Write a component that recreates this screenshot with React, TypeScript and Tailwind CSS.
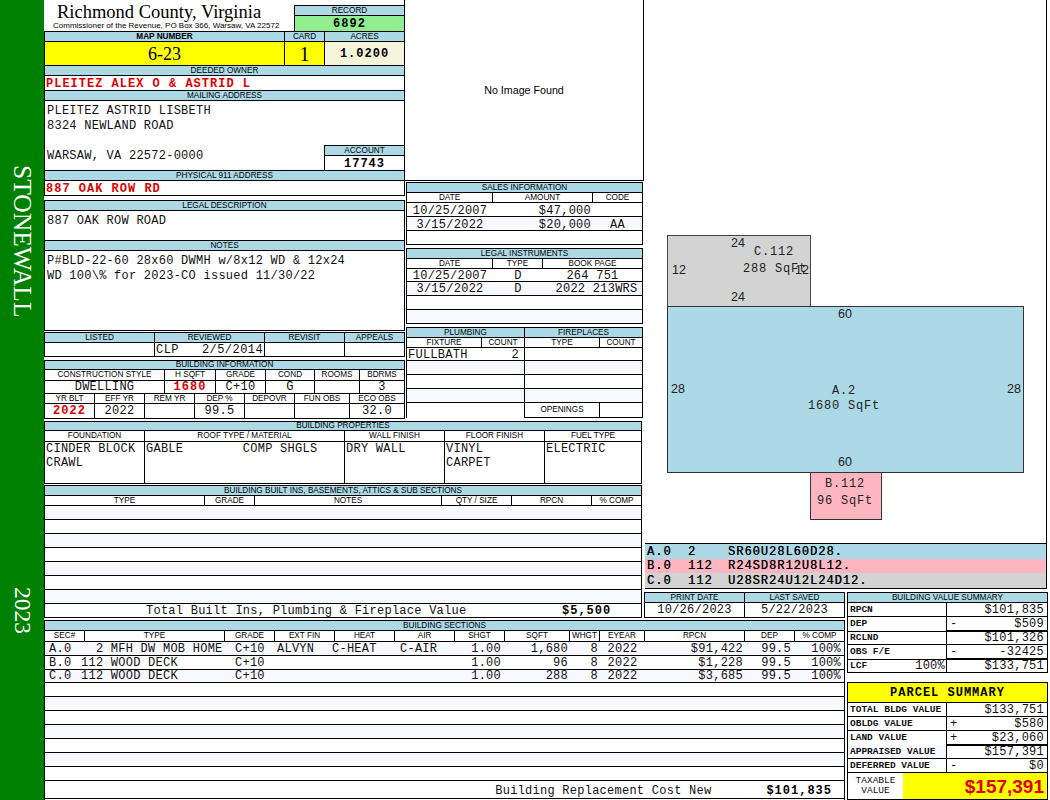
import type { ReactNode } from 'react';

const sans = "font-['Liberation_Sans',Arial,sans-serif]";
const mono = "font-['Liberation_Mono','Courier_New',monospace] text-[12px] tracking-[0.25px] text-[#111]";
const monoBold = "font-['Liberation_Mono','Courier_New',monospace] text-[12px] font-bold tracking-[1px]";
const label = "font-['Liberation_Mono','Courier_New',monospace] text-[9.5px] font-bold tracking-[0px] text-[#111]";

function Head({ children, className = 'h-[10px]' }: { children?: ReactNode; className?: string }) {
    return (
        <div className={`flex items-center justify-center overflow-hidden whitespace-nowrap border-b border-black bg-[#add8e6] pt-px text-[8.2px] leading-none text-black ${sans} ${className}`}>
            {children}
        </div>
    );
}

// column caption, same size as the blue header
function Cap({ children, className = '' }: { children?: ReactNode; className?: string }) {
    return (
        <div className={`flex items-center justify-center overflow-hidden whitespace-nowrap border-r border-black pt-px text-[8.2px] leading-none text-black last:border-r-0 ${sans} ${className}`}>
            {children}
        </div>
    );
}

function Val({ children, className = '' }: { children?: ReactNode; className?: string }) {
    return (
        <div className={`flex items-center justify-center whitespace-pre border-r border-black leading-none last:border-r-0 ${mono} ${className}`}>
            {children}
        </div>
    );
}

function Blank({ rows, startAlt = true, h = 'h-[14px]' }: { rows: number; startAlt?: boolean; h?: string }) {
    return (
        <>
            {Array.from({ length: rows }, (_, i) => (
                <div key={i} className={`border-b border-black ${h} ${(i % 2 === 0) === startAlt ? 'bg-[#f8f8ff]' : 'bg-white'}`} />
            ))}
        </>
    );
}

function DataRow({ cols, cells, places = [], alt, h = 'h-[14px]', pad = 'pt-px' }: { cols: string; cells: string[]; places?: string[]; alt?: boolean; h?: string; pad?: string }) {
    return (
        <div className={`grid border-b border-black ${cols} ${h} ${alt ? 'bg-[#f8f8ff]' : 'bg-white'}`}>
            {cells.map((c, i) => (
                <div key={i} className={`flex items-center whitespace-pre leading-none tracking-[0.4px] ${mono} ${pad} ${places[i] ?? 'justify-center'}`}>{c}</div>
            ))}
        </div>
    );
}

function Sidebar() {
    return (
        <div className="flex h-[800px] w-[44px] shrink-0 flex-col items-center bg-[#008000] pt-[165px] text-white">
            <div className="text-[25.5px] leading-none [writing-mode:vertical-rl] font-['Liberation_Serif',serif]">STONEWALL</div>
            <div className="mt-auto mb-[166px] text-[23.5px] leading-none [writing-mode:vertical-rl] font-['Liberation_Serif',serif]">2023</div>
        </div>
    );
}

function OwnerColumn() {
    return (
        <div className="w-[361px] shrink-0">
            <div className="flex h-[31px] border-r border-black">
                <div className="flex-1 pl-[9px]">
                    <div className="pl-[4px] pt-[3px] text-[18.5px] leading-[18px] text-black font-['Liberation_Serif',serif]">Richmond County, Virginia</div>
                    <div className={`whitespace-nowrap text-[8px] leading-[9px] text-black ${sans}`}>Commissioner of the Revenue, PO Box 366, Warsaw, VA 22572</div>
                </div>
                <div className="mt-[5px] w-[110px] border-l border-t border-black">
                    <Head>RECORD</Head>
                    <div className={`flex h-[15px] items-center justify-center bg-[#90ee90] pt-px leading-none ${monoBold}`}>6892</div>
                </div>
            </div>
            <div className="border-x border-black">
                <div className="grid h-[11px] grid-cols-[240px_40px_79px] border-y border-black bg-[#add8e6]">
                    <Cap className="font-bold">MAP NUMBER</Cap>
                    <Cap>CARD</Cap>
                    <Cap>ACRES</Cap>
                </div>
                <div className="grid h-[24px] grid-cols-[240px_40px_79px] border-b border-black">
                    <div className="flex items-center justify-center border-r border-black bg-[#ffff00] text-[18px] leading-none font-['Liberation_Serif',serif]">6-23</div>
                    <div className="flex items-center justify-center border-r border-black bg-[#ffff00] text-[20px] leading-none font-['Liberation_Serif',serif]">1</div>
                    <div className={`flex items-center justify-center bg-[#f5f5dc] leading-none ${monoBold}`}>1.0200</div>
                </div>
                <Head>DEEDED OWNER</Head>
                <div className={`flex h-[15px] items-center whitespace-pre border-b border-black pl-px pt-[2px] leading-none text-[#e00000] ${monoBold}`}>PLEITEZ ALEX O &amp; ASTRID L</div>
                <Head>MAILING ADDRESS</Head>
                <div className="flex h-[70px] border-b border-black">
                    <div className={`flex-1 pl-[2px] pt-[3px] leading-[15px] tracking-[0.4px] ${mono}`}>
                        <div>PLEITEZ ASTRID LISBETH</div>
                        <div>8324 NEWLAND ROAD</div>
                        <div>&nbsp;</div>
                        <div>WARSAW, VA 22572-0000</div>
                    </div>
                    <div className="mt-auto w-[80px] border-l border-t border-black">
                        <Head>ACCOUNT</Head>
                        <div className={`flex h-[14px] items-center justify-center pt-px leading-none ${monoBold}`}>17743</div>
                    </div>
                </div>
                <Head>PHYSICAL 911 ADDRESS</Head>
                <div className={`flex h-[15px] items-center whitespace-pre border-b border-black pl-px pt-[2px] leading-none text-[#e00000] ${monoBold}`}>887 OAK ROW RD</div>
            </div>
            <div className="mt-[4px] border-x border-t border-black">
                <Head>LEGAL DESCRIPTION</Head>
                <div className={`h-[30px] border-b border-black pl-[2px] pt-[3px] leading-[15px] ${mono} tracking-[0.4px]`}>887 OAK ROW ROAD</div>
                <Head>NOTES</Head>
                <div className={`h-[80px] border-b border-black pl-[2px] pt-[3px] leading-[15px] ${mono} tracking-[0.4px]`}>
                    <div>P#BLD-22-60 28x60 DWMH w/8x12 WD &amp; 12x24</div>
                    <div>WD 100\% for 2023-CO issued 11/30/22</div>
                </div>
            </div>
            <div className="mt-px border-x border-t border-black">
                <div className="grid h-[10px] grid-cols-[110px_110px_80px_59px] border-b border-black bg-[#add8e6]">
                    <Cap>LISTED</Cap>
                    <Cap>REVIEWED</Cap>
                    <Cap>REVISIT</Cap>
                    <Cap>APPEALS</Cap>
                </div>
                <div className="grid h-[14px] grid-cols-[110px_110px_80px_59px] border-b border-black">
                    <Val />
                    <Val className="justify-start pl-[1px] tracking-[0.45px]">CLP   2/5/2014</Val>
                    <Val />
                    <Val />
                </div>
            </div>
            <div className="mt-[3px] border-x border-t border-black">
                <Head className="h-[9px]">BUILDING INFORMATION</Head>
                <div className="grid h-[11px] grid-cols-[120px_51px_50px_49px_45px_44px] border-b border-black">
                    <Cap>CONSTRUCTION STYLE</Cap>
                    <Cap>H SQFT</Cap>
                    <Cap>GRADE</Cap>
                    <Cap>COND</Cap>
                    <Cap>ROOMS</Cap>
                    <Cap>BDRMS</Cap>
                </div>
                <div className="grid h-[13px] grid-cols-[120px_51px_50px_49px_45px_44px] border-b border-black">
                    <Val>DWELLING</Val>
                    <Val className={`text-[#e00000] ${monoBold}`}>1680</Val>
                    <Val>C+10</Val>
                    <Val>G</Val>
                    <Val />
                    <Val>3</Val>
                </div>
                <div className="grid h-[10px] grid-cols-[50px_50px_50px_50px_50px_55px_54px] border-b border-black">
                    <Cap>YR BLT</Cap>
                    <Cap>EFF YR</Cap>
                    <Cap>REM YR</Cap>
                    <Cap>DEP %</Cap>
                    <Cap>DEPOVR</Cap>
                    <Cap>FUN OBS</Cap>
                    <Cap>ECO OBS</Cap>
                </div>
                <div className="grid h-[15px] grid-cols-[50px_50px_50px_50px_50px_55px_54px] border-b border-black">
                    <Val className={`text-[#e00000] ${monoBold}`}>2022</Val>
                    <Val>2022</Val>
                    <Val />
                    <Val>99.5</Val>
                    <Val />
                    <Val />
                    <Val>32.0</Val>
                </div>
            </div>
        </div>
    );
}

function SalesColumn() {
    const amount = ['justify-center', 'justify-end pr-[2px]', 'justify-center'];
    return (
        <div className="w-[239px] shrink-0 px-px">
            <div className="-mx-px flex h-[181px] items-center justify-center border-b border-r border-black">
                <span className={`text-[10.7px] leading-none text-black ${sans}`}>No Image Found</span>
            </div>
            <div className="mt-px border-x border-t border-black">
                <Head>SALES INFORMATION</Head>
                <div className="grid h-[10px] grid-cols-[86px_100px_49px] border-b border-black">
                    <Cap>DATE</Cap>
                    <Cap>AMOUNT</Cap>
                    <Cap>CODE</Cap>
                </div>
                <DataRow cols="grid-cols-[86px_100px_49px]" cells={['10/25/2007', '$47,000', '']} places={amount} pad="pt-[2px]" />
                <DataRow cols="grid-cols-[86px_100px_49px]" cells={['3/15/2022', '$20,000', 'AA']} places={amount} pad="pt-[2px]" alt />
                <Blank rows={1} startAlt={false} />
            </div>
            <div className="mt-[3px] border-x border-t border-black">
                <Head>LEGAL INSTRUMENTS</Head>
                <div className="grid h-[10px] grid-cols-[86px_50px_99px] border-b border-black">
                    <Cap>DATE</Cap>
                    <Cap>TYPE</Cap>
                    <Cap>BOOK PAGE</Cap>
                </div>
                <DataRow cols="grid-cols-[86px_50px_99px]" cells={['10/25/2007', 'D', '264 751']} h="h-[13px]" />
                <DataRow cols="grid-cols-[86px_50px_99px]" cells={['3/15/2022', 'D', '2022 213WRS']} places={['justify-center', 'justify-center', 'justify-center pl-[8px]']} alt />
                <Blank rows={2} startAlt={false} />
            </div>
            <div className="mt-[3px] grid grid-cols-[118px_119px]">
                <div className="border-l border-t border-black">
                    <Head>PLUMBING</Head>
                    <div className="grid h-[10px] grid-cols-[75px_42px] border-b border-black">
                        <Cap>FIXTURE</Cap>
                        <Cap>COUNT</Cap>
                    </div>
                    <div className={`flex h-[13px] items-center justify-between whitespace-pre border-b border-black pl-px pr-[5px] pt-[2px] leading-none tracking-[0.4px] ${mono}`}>
                        <span>FULLBATH</span>
                        <span>2</span>
                    </div>
                    <Blank rows={3} />
                </div>
                <div className="border-x border-t border-black">
                    <Head>FIREPLACES</Head>
                    <div className="grid h-[10px] grid-cols-[75px_42px] border-b border-black">
                        <Cap>TYPE</Cap>
                        <Cap>COUNT</Cap>
                    </div>
                    <Blank rows={1} startAlt={false} h="h-[13px]" />
                    <Blank rows={3} />
                    <div className="grid h-[15px] grid-cols-[75px_42px] border-b border-black">
                        <Cap>OPENINGS</Cap>
                        <Cap />
                    </div>
                </div>
            </div>
        </div>
    );
}

const propertyCols = 'grid-cols-[100px_200px_100px_100px_96px]';
const builtInCols = 'grid-cols-[160px_50px_187px_70px_80px_49px]';

function BuildingProperties() {
    return (
        <>
            <div className="mt-[2px] w-[598px] border-x border-t border-black">
                <Head className="h-[9px]">BUILDING PROPERTIES</Head>
                <div className={`grid h-[11px] border-b border-black ${propertyCols}`}>
                    <Cap>FOUNDATION</Cap>
                    <Cap>ROOF TYPE / MATERIAL</Cap>
                    <Cap>WALL FINISH</Cap>
                    <Cap>FLOOR FINISH</Cap>
                    <Cap>FUEL TYPE</Cap>
                </div>
                <div className={`grid h-[42px] border-b border-black ${propertyCols}`}>
                    {['CINDER BLOCK\nCRAWL', 'GABLE        COMP SHGLS', 'DRY WALL', 'VINYL\nCARPET', 'ELECTRIC'].map((t) => (
                        <div key={t} className={`whitespace-pre border-r border-black pl-[1px] leading-[14px] last:border-r-0 ${mono} tracking-[0.4px]`}>{t}</div>
                    ))}
                </div>
            </div>
            <div className="mt-px w-[598px] border-x border-t border-black">
                <Head>BUILDING BUILT INS, BASEMENTS, ATTICS &amp; SUB SECTIONS</Head>
                <div className={`grid h-[10px] border-b border-black ${builtInCols}`}>
                    <Cap>TYPE</Cap>
                    <Cap>GRADE</Cap>
                    <Cap>NOTES</Cap>
                    <Cap>QTY / SIZE</Cap>
                    <Cap>RPCN</Cap>
                    <Cap>% COMP</Cap>
                </div>
                <Blank rows={7} />
                <div className="flex h-[14px] items-center border-b border-black pt-px">
                    <span className={`ml-[101px] w-[416px] whitespace-pre leading-none ${mono}`}>Total Built Ins, Plumbing &amp; Fireplace Value</span>
                    <span className={`leading-none ${monoBold}`}>$5,500</span>
                </div>
            </div>
        </>
    );
}

function FloorPlan() {
    const dim = { fontFamily: "'Liberation Sans', Arial, sans-serif", fontSize: 12.5, fill: '#222' };
    const tag = { fontFamily: "'Liberation Mono', monospace", fontSize: 12, letterSpacing: 0.8, fill: '#222' };
    return (
        <svg viewBox="0 0 403 543" className="block h-[543px] w-[403px]">
            <rect x="22.5" y="235.5" width="143" height="71" fill="#d3d3d3" stroke="#444" />
            <rect x="22.5" y="306.5" width="356" height="166" fill="#add8e6" stroke="#333" />
            <rect x="165.5" y="472.5" width="71" height="47" fill="#ffb6c1" stroke="#333" />
            <text x="93" y="247" textAnchor="middle" {...dim}>24</text>
            <text x="129" y="255" textAnchor="middle" {...tag}>C.112</text>
            <text x="98" y="272" {...tag}>288 SqFt</text>
            <text x="27" y="274" {...dim}>12</text>
            <text x="150" y="274" {...dim}>12</text>
            <text x="93" y="301" textAnchor="middle" {...dim}>24</text>
            <text x="200" y="318" textAnchor="middle" {...dim}>60</text>
            <text x="26" y="393" {...dim}>28</text>
            <text x="199" y="394" textAnchor="middle" {...tag}>A.2</text>
            <text x="199" y="409" textAnchor="middle" {...tag}>1680 SqFt</text>
            <text x="362" y="393" {...dim}>28</text>
            <text x="200" y="466" textAnchor="middle" {...dim}>60</text>
            <text x="200" y="487" textAnchor="middle" {...tag}>B.112</text>
            <text x="200" y="504" textAnchor="middle" {...tag}>96 SqFt</text>
        </svg>
    );
}

const codes = [
    { sec: 'A.0', count: '2', path: 'SR60U28L60D28.', bg: 'bg-[#add8e6]' },
    { sec: 'B.0', count: '112', path: 'R24SD8R12U8L12.', bg: 'bg-[#ffb6c1]' },
    { sec: 'C.0', count: '112', path: 'U28SR24U12L24D12.', bg: 'bg-[#d3d3d3]' },
];

function SketchPanel() {
    return (
        <div className="col-span-2 w-[404px] pl-px pr-[1px]">
            <div className="h-[544px] border-b border-r border-black">
                <FloorPlan />
            </div>
            <div className="border-b border-r border-black">
                {codes.map((c) => (
                    <div key={c.sec} className={`flex h-[14.6px] items-center whitespace-pre pl-[2px] pt-px leading-none ${monoBold} font-normal [text-shadow:0.3px_0_0_#222] ${c.bg}`}>
                        <span className="w-[41px]">{c.sec}</span>
                        <span className="w-[40px]">{c.count}</span>
                        <span>{c.path}</span>
                    </div>
                ))}
            </div>
        </div>
    );
}

function PrintDates() {
    return (
        <div className="w-[201px]">
            <div className="border-x border-t border-black">
                <div className="grid h-[10px] grid-cols-[100px_99px] border-b border-black bg-[#add8e6]">
                    <Cap>PRINT DATE</Cap>
                    <Cap>LAST SAVED</Cap>
                </div>
                <div className="grid h-[15px] grid-cols-[100px_99px] border-b border-black">
                    <Val>10/26/2023</Val>
                    <Val>5/22/2023</Val>
                </div>
            </div>
        </div>
    );
}

const sectionCols = 'grid-cols-[40px_140px_50px_60px_60px_60px_50px_65px_30px_45px_100px_50px_49px]';
const sectionCaps = ['SEC#', 'TYPE', 'GRADE', 'EXT FIN', 'HEAT', 'AIR', 'SHGT', 'SQFT', 'WHGT', 'EYEAR', 'RPCN', 'DEP', '% COMP'];
const sectionRows = [
    ['A.0', '  2 MFH DW MOB HOME', 'C+10', 'ALVYN', 'C-HEAT', 'C-AIR', '1.00', '1,680', '8', '2022', '$91,422', '99.5', '100%'],
    ['B.0', '112 WOOD DECK', 'C+10', '', '', '', '1.00', '96', '8', '2022', '$1,228', '99.5', '100%'],
    ['C.0', '112 WOOD DECK', 'C+10', '', '', '', '1.00', '288', '8', '2022', '$3,685', '99.5', '100%'],
];

// per column placement of the data cells
const sectionCell = [
    'pl-[4px]',
    '-ml-[4px]',
    'pl-[10px]',
    'pl-[2px]',
    '-ml-[3px]',
    'pl-[5px]',
    'justify-end pr-[4px]',
    'justify-end pr-[2px]',
    'justify-end pr-[2px]',
    'justify-center',
    'justify-end pr-[2px]',
    'justify-end pr-[4px]',
    'justify-end pr-[3px]',
];

function BuildingSections() {
    return (
        <div className="col-span-2 w-[801px] border-x border-t border-black">
            <Head>BUILDING SECTIONS</Head>
            <div className={`grid h-[11px] border-b border-black ${sectionCols}`}>
                {sectionCaps.map((c) => (
                    <Cap key={c}>{c}</Cap>
                ))}
            </div>
            {sectionRows.map((row, r) => (
                <div key={r} className={`grid border-b border-black ${sectionCols} ${r === 2 ? 'h-[13px]' : 'h-[14px]'} ${r % 2 === 0 ? 'bg-[#f8f8ff]' : 'bg-white'}`}>
                    {row.map((c, i) => (
                        <div key={i} className={`flex items-center overflow-visible whitespace-pre leading-none ${mono} ${sectionCell[i]}`}>{c}</div>
                    ))}
                </div>
            ))}
            <Blank rows={7} startAlt={false} />
            <div className="flex h-[18px] items-center justify-end border-b border-black pr-[12px] pt-[3px]">
                <span className={`mr-[55px] whitespace-pre leading-none ${mono}`}>Building Replacement Cost New</span>
                <span className={`leading-none ${monoBold}`}>$101,835</span>
            </div>
        </div>
    );
}

function SummaryRow({ name, sign, value, note, thick, small, alt }: { name: string; sign?: string; value: string; note?: string; thick?: boolean; small?: boolean; alt?: boolean }) {
    return (
        <div className="grid h-[14px] grid-cols-[99px_100px]">
            <div className={`flex items-center justify-between whitespace-pre border-b border-r border-black pl-[2px] pr-[1px] leading-none ${label} ${small ? 'text-[8.5px]' : ''} ${alt ? 'bg-[#f8f8ff]' : ''}`}>
                <span>{name}</span>
                {note && <span className={`font-normal ${mono}`}>{note}</span>}
            </div>
            <div className={`flex items-center justify-between whitespace-pre border-black pl-[3px] pr-[3px] pt-px leading-none ${mono} ${thick ? 'border-b-[2px]' : 'border-b'}`}>
                <span>{sign}</span>
                <span>{value}</span>
            </div>
        </div>
    );
}

function ValueSummary() {
    return (
        <div className="row-span-2 w-[203px] pl-[2px]">
            <div className="w-[201px] border-x border-t border-black">
                <Head>BUILDING VALUE SUMMARY</Head>
                <SummaryRow name="RPCN" value="$101,835" />
                <SummaryRow name="DEP" sign="-" value="$509" thick />
                <SummaryRow name="RCLND" value="$101,326" />
                <SummaryRow name="OBS F/E" sign="-" value="-32425" thick small />
                <SummaryRow name="LCF" note="100%" value="$133,751" />
            </div>
            <div className="mt-[9px] w-[201px] border-x border-t border-black">
                <div className={`flex h-[20px] items-center justify-center border-b border-black bg-[#ffff00] leading-none ${monoBold} tracking-[0.4px]`}>PARCEL  SUMMARY</div>
                <SummaryRow name="TOTAL BLDG VALUE" value="$133,751" />
                <SummaryRow name="OBLDG VALUE" sign="+" value="$580" />
                <SummaryRow name="LAND VALUE" sign="+" value="$23,060" thick />
                <SummaryRow name="APPRAISED VALUE" value="$157,391" alt />
                <SummaryRow name="DEFERRED VALUE" sign="-" value="$0" />
                <div className="grid h-[27px] grid-cols-[55px_144px] border-b border-black">
                    <div className={`flex flex-col items-center justify-center text-center leading-[10px] ${label} font-normal`}>
                        <span>TAXABLE</span>
                        <span>VALUE</span>
                    </div>
                    <div className={`flex items-center justify-end bg-[#ffff00] pr-[3px] text-[19px] font-bold leading-none text-[#e00000] ${sans}`}>$157,391</div>
                </div>
            </div>
        </div>
    );
}

export default function App() {
    return (
        <div className="flex h-[800px] w-[1050px] overflow-hidden bg-white text-black">
            <Sidebar />
            <div className="grid w-[1006px] grid-cols-[600px_201px_205px] grid-rows-[592px_28px_180px]">
                <div className="row-span-2">
                    <div className="flex">
                        <OwnerColumn />
                        <SalesColumn />
                    </div>
                    <BuildingProperties />
                </div>
                <SketchPanel />
                <PrintDates />
                <ValueSummary />
                <BuildingSections />
            </div>
        </div>
    );
}
